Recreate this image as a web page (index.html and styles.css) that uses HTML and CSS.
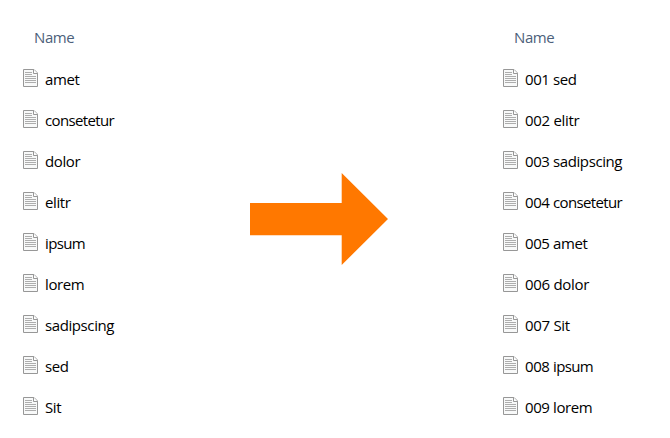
FILE: index.html
```html
<!DOCTYPE html>
<html lang="en">
<head>
<meta charset="utf-8">
<title>File order</title>
<link rel="stylesheet" href="styles.css">
</head>
<body>
<svg class="defs" aria-hidden="true"><symbol id="file" viewBox="0 0 16 18">
<path d="M1.5.5h10.5l3.5 3.5v13.5h-14z" fill="#f8f9f9" stroke="#979797"/>
<path d="M11.5.5v4h4" fill="#fff" stroke="#979797"/>
<path d="M3 3.5h7M3 5.500h7M3 7.500h11M3 9.500h11M3 11.500h11M3 13.500h11" stroke="#adadad"/>
</symbol></svg>
<main class="comparison">
<section class="list">
<h2 class="heading">Name</h2>
<ul class="files">
<li class="file"><svg class="icon"><use href="#file"/></svg><span>amet</span></li>
<li class="file"><svg class="icon"><use href="#file"/></svg><span class="tight">consetetur</span></li>
<li class="file"><svg class="icon"><use href="#file"/></svg><span>dolor</span></li>
<li class="file"><svg class="icon"><use href="#file"/></svg><span>elitr</span></li>
<li class="file"><svg class="icon"><use href="#file"/></svg><span class="tight">ipsum</span></li>
<li class="file"><svg class="icon"><use href="#file"/></svg><span>lorem</span></li>
<li class="file"><svg class="icon"><use href="#file"/></svg><span>sadipscing</span></li>
<li class="file"><svg class="icon"><use href="#file"/></svg><span>sed</span></li>
<li class="file"><svg class="icon"><use href="#file"/></svg><span>Sit</span></li>
</ul>
</section>
<svg class="arrow" viewBox="0 0 138 92"><path d="M0 30h91.700V0L138 46 91.700 92V62.300H0z" fill="#ff7800"/></svg>
<section class="list">
<h2 class="heading">Name</h2>
<ul class="files">
<li class="file"><svg class="icon"><use href="#file"/></svg><span>001 sed</span></li>
<li class="file"><svg class="icon"><use href="#file"/></svg><span class="loose">002 elitr</span></li>
<li class="file"><svg class="icon"><use href="#file"/></svg><span>003 sadipscing</span></li>
<li class="file"><svg class="icon"><use href="#file"/></svg><span>004 <span class="tight">consetetur</span></span></li>
<li class="file"><svg class="icon"><use href="#file"/></svg><span>005 amet</span></li>
<li class="file"><svg class="icon"><use href="#file"/></svg><span class="loose">006 dolor</span></li>
<li class="file"><svg class="icon"><use href="#file"/></svg><span class="loose">007 Sit</span></li>
<li class="file"><svg class="icon"><use href="#file"/></svg><span>008 <span class="tight">ipsum</span></span></li>
<li class="file"><svg class="icon"><use href="#file"/></svg><span>009 lorem</span></li>
</ul>
</section>
</main>
</body>
</html>
```
FILE: styles.css
```css
body { margin: 0; background: #fff; color: #000; font: 15px/20px "Open Sans", "Noto Sans", sans-serif; letter-spacing: -0.4px; }
.defs { display: none; }
.comparison { display: grid; grid-template-columns: 228px 138px 114px 168px; padding: 27px 0 0 22px; height: 411px; overflow: hidden; }
.comparison > .list:last-child { grid-column: 4; }
.list { white-space: nowrap; }
.heading { margin: 0 0 11px 12px; font-size: 15px; font-weight: 400; line-height: 20px; color: #4c607a; }
.files { margin: 0; padding: 0; list-style: none; }
.file { display: flex; align-items: center; height: 41px; gap: 7px; }
.icon { width: 16px; height: 18px; flex: none; margin-top: -1px; }
.tight { letter-spacing: -0.65px; }
.loose { letter-spacing: -0.3px; }
.arrow { width: 138px; height: 92px; margin-top: 146px; }
```
